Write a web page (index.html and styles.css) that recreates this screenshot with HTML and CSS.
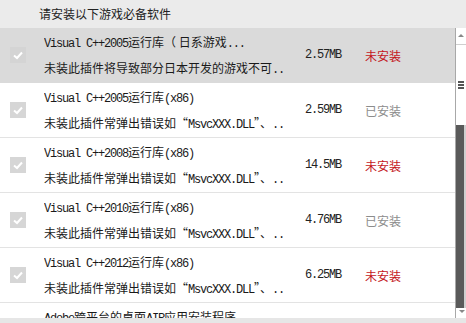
FILE: index.html
```html
<!DOCTYPE html>
<html lang="zh-CN">
<head>
<meta charset="utf-8">
<link rel="stylesheet" href="styles.css">
</head>
<body>
<div class="app">
  <div class="header">请安装以下游戏必备软件</div>
  <div class="main">
    <div class="list">
      <div class="row selected">
        <div class="check"><svg width="16" height="16" viewBox="0 0 16 16"><polyline points="4,8.5 7,11 12,5.5" fill="none" stroke="#fff" stroke-width="2"/></svg></div>
        <div class="text">
          <div class="title"><span class="en">Visual C++2005</span>运行库（ 日系游戏<span class="en">...</span></div>
          <div class="desc">未装此插件将导致部分日本开发的游戏不可<span class="en">..</span></div>
        </div>
        <div class="size en">2.57MB</div>
        <div class="status no">未安装</div>
      </div>
      <div class="row">
        <div class="check"><svg width="16" height="16" viewBox="0 0 16 16"><polyline points="4,8.5 7,11 12,5.5" fill="none" stroke="#fff" stroke-width="2"/></svg></div>
        <div class="text">
          <div class="title"><span class="en">Visual C++2005</span>运行库<span class="en">(x86)</span></div>
          <div class="desc">未装此插件常弹出错误如“<span class="en">MsvcXXX.DLL</span>”、<span class="en">..</span></div>
        </div>
        <div class="size en">2.59MB</div>
        <div class="status yes">已安装</div>
      </div>
      <div class="row">
        <div class="check"><svg width="16" height="16" viewBox="0 0 16 16"><polyline points="4,8.5 7,11 12,5.5" fill="none" stroke="#fff" stroke-width="2"/></svg></div>
        <div class="text">
          <div class="title"><span class="en">Visual C++2008</span>运行库<span class="en">(x86)</span></div>
          <div class="desc">未装此插件常弹出错误如“<span class="en">MsvcXXX.DLL</span>”、<span class="en">..</span></div>
        </div>
        <div class="size en">14.5MB</div>
        <div class="status no">未安装</div>
      </div>
      <div class="row">
        <div class="check"><svg width="16" height="16" viewBox="0 0 16 16"><polyline points="4,8.5 7,11 12,5.5" fill="none" stroke="#fff" stroke-width="2"/></svg></div>
        <div class="text">
          <div class="title"><span class="en">Visual C++2010</span>运行库<span class="en">(x86)</span></div>
          <div class="desc">未装此插件常弹出错误如“<span class="en">MsvcXXX.DLL</span>”、<span class="en">..</span></div>
        </div>
        <div class="size en">4.76MB</div>
        <div class="status yes">已安装</div>
      </div>
      <div class="row">
        <div class="check"><svg width="16" height="16" viewBox="0 0 16 16"><polyline points="4,8.5 7,11 12,5.5" fill="none" stroke="#fff" stroke-width="2"/></svg></div>
        <div class="text">
          <div class="title"><span class="en">Visual C++2012</span>运行库<span class="en">(x86)</span></div>
          <div class="desc">未装此插件常弹出错误如“<span class="en">MsvcXXX.DLL</span>”、<span class="en">..</span></div>
        </div>
        <div class="size en">6.25MB</div>
        <div class="status no">未安装</div>
      </div>
      <div class="row">
        <div class="check"><svg width="16" height="16" viewBox="0 0 16 16"><polyline points="4,8.5 7,11 12,5.5" fill="none" stroke="#fff" stroke-width="2"/></svg></div>
        <div class="text">
          <div class="title"><span class="en">Adobe</span>跨平台的桌面<span class="en">AIR</span>应用安装程序</div>
          <div class="desc">未装此插件部分游戏无法运行</div>
        </div>
        <div class="size en">11.2MB</div>
        <div class="status no">未安装</div>
      </div>
    </div>
    <div class="scrollbar">
      <div class="sb-up"><span class="tri-up"></span></div>
      <div class="sb-thumb"><span class="grip"></span></div>
      <div class="sb-track"></div>
      <div class="sb-down"><span class="tri-down"></span></div>
    </div>
  </div>
  <div class="footer"></div>
</div>
</body>
</html>
```

FILE: styles.css
```css
html, body {
  margin: 0;
  padding: 0;
  background: #ffffff;
}
.app {
  width: 466px;
  height: 323px;
  overflow: hidden;
  display: flex;
  flex-direction: column;
  font-family: "Noto Sans CJK SC", "Liberation Sans", sans-serif;
  font-size: 12px;
  color: #1a1a1a;
}
.en {
  font-family: "Liberation Mono", "Noto Sans CJK SC", monospace;
  letter-spacing: -1.2px;
}
.header {
  height: 28px;
  line-height: 28px;
  padding-left: 39px;
  background: #ebebeb;
  color: #222;
  flex: none;
}
.main {
  flex: none;
  height: 290px;
  display: flex;
}
.list {
  flex: 1;
  overflow: hidden;
}
.row {
  height: 54px;
  border-bottom: 1px solid #e3e3e3;
  display: grid;
  grid-template-columns: 44px 261px 60px 1fr;
  align-items: center;
}
.row.selected {
  background: #dadada;
  border-bottom-color: #dadada;
}
.check {
  margin-left: 10px;
  width: 16px;
  height: 16px;
  background: #d6d6d6;
}
.check svg {
  display: block;
}
.row.selected .check {
  background: #d4d4d4;
}
.text {
  align-self: start;
  padding-top: 6px;
  white-space: nowrap;
  overflow: hidden;
}
.title {
  height: 16px;
  line-height: 16px;
}
.desc {
  margin-top: 10px;
  height: 16px;
  line-height: 16px;
}
.size {
  color: #222;
}
.status.no {
  color: #c4161c;
}
.status.yes {
  color: #8c8c8c;
}
.scrollbar {
  flex: none;
  width: 10px;
  border-left: 1px solid #a8a8a8;
  display: flex;
  flex-direction: column;
  background: #fff;
}
.sb-up {
  height: 17px;
  box-sizing: border-box;
  border-top: 4px solid #fff;
  border-bottom: 1px solid #cfcfcf;
  position: relative;
}
.tri-up {
  position: absolute;
  left: 2px;
  top: 2px;
  border-left: 3px solid transparent;
  border-right: 3px solid transparent;
  border-bottom: 3px solid #888;
}
.sb-thumb {
  height: 80px;
  display: flex;
  align-items: center;
  justify-content: center;
}
.grip {
  width: 6px;
  height: 2px;
  background: #555;
  box-shadow: 0 3px 0 #555, 0 -3px 0 #555;
}
.sb-track {
  flex: 1;
  background: #5a5a5a;
  border-right: 2px solid #cfcfcf;
}
.sb-down {
  height: 10px;
  position: relative;
}
.tri-down {
  position: absolute;
  left: 3px;
  top: 2px;
  border-left: 3px solid transparent;
  border-right: 3px solid transparent;
  border-top: 3px solid #888;
}
.footer {
  flex: none;
  height: 5px;
  background: #e6e6e6;
}
```
